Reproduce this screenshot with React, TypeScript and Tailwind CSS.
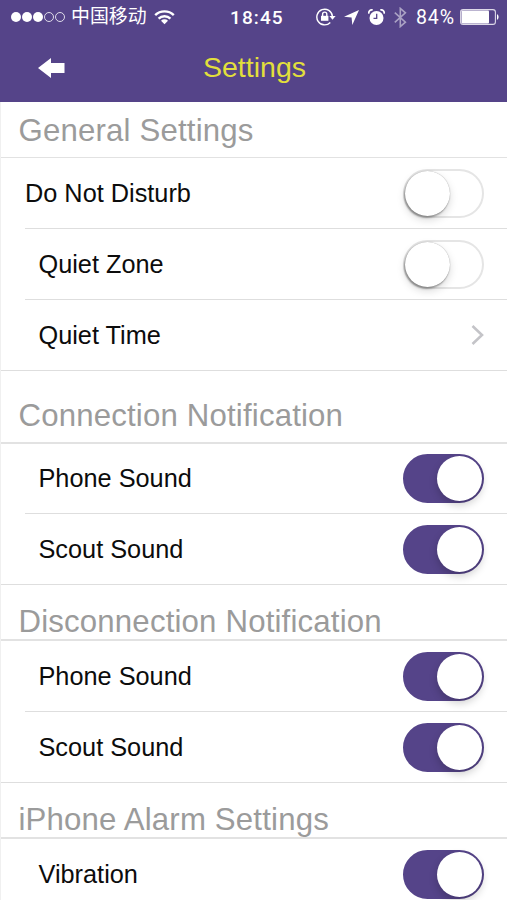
import clsx from "clsx";

type RowProps = {
  label: string;
  on?: boolean;
  link?: boolean;
  outdent?: boolean;
  last?: boolean;
  className?: string;
};

function StatusBar() {
  return (
    <div className="flex h-[34px] items-center pl-[11px] text-white">
      <div className="flex w-[55px] gap-[1.5px]">
        {[1, 1, 1, 0, 0].map((filled, i) => (
          <span
            key={i}
            className={clsx(
              "size-[9.5px] shrink-0 rounded-full",
              filled ? "bg-white" : "border border-white/80",
            )}
          />
        ))}
      </div>
      <span className="ml-[5px] w-[76px] pt-px text-[18.9px] leading-none whitespace-nowrap">
        中国移动
      </span>
      <svg className="ml-[7px]" width="21" height="16" viewBox="0 0 21 16" fill="none" stroke="white" strokeWidth="2.4">
        <path d="M1.2 6.2a13.2 13.2 0 0 1 18.6 0" />
        <path d="M4.6 9.7a8.4 8.4 0 0 1 11.8 0" />
        <path d="M10.5 15.2 7 11.7a5 5 0 0 1 7 0Z" fill="white" stroke="none" />
      </svg>
      <span className="ml-[55px] w-[56px] font-[Roboto] text-[19px] leading-none font-medium tracking-[1.1px]">
        18:45
      </span>
      <svg className="ml-[30px]" width="20" height="18" viewBox="0 0 20 18" fill="none" stroke="white" strokeWidth="1.4">
        <path d="M16.4 8.2A7.8 7.8 0 1 0 14.3 14.4" />
        <path d="m13.4 8 6.2 0-3.1 3.8Z" fill="white" stroke="none" />
        <path d="M6.6 8V6.2a2.1 2.1 0 0 1 4.2 0V8" />
        <path d="M5 7.8h7.4v5H5Z" fill="white" stroke="none" />
      </svg>
      <svg className="ml-[8px]" width="15" height="15" viewBox="0 0 15 15" fill="white">
        <path d="M15 0 8.3 15 7.6 7.6 0 6.8Z" />
      </svg>
      <svg className="ml-[9px]" width="17" height="17" viewBox="0 0 17 17">
        <circle cx="8.5" cy="9" r="7" fill="white" />
        <path d="M.9 4.6A3 3 0 0 1 4.7 1M16.1 4.6A3 3 0 0 0 12.3 1" fill="none" stroke="white" strokeWidth="1.7" />
        <path d="M8.7 4.8v4.5H5.5" fill="none" stroke="#554489" strokeWidth="1.3" />
      </svg>
      <svg className="ml-[9px] opacity-50" width="13" height="21" viewBox="0 0 13 21" fill="none" stroke="white" strokeWidth="1.6">
        <path d="M.8 5.6 11.4 15.2 6.3 19.6V1.4l5.1 4.4L.8 15.4" />
      </svg>
      <span className="ml-[9px] w-[41px] pt-px font-[Roboto] text-[19.5px] leading-none tracking-[0.9px]">
        84%
      </span>
      <svg className="ml-[3px]" width="40" height="16" viewBox="0 0 40 16">
        <rect x=".6" y=".6" width="34.8" height="14.8" rx="2.5" fill="none" stroke="white" strokeOpacity=".8" strokeWidth="1.1" />
        <rect x="1.5" y="1.5" width="27.5" height="13" rx="1" fill="white" />
        <path d="M37 5a3.6 3.6 0 0 1 0 6Z" fill="white" />
      </svg>
    </div>
  );
}

function NavBar() {
  return (
    <div className="flex h-[67px] items-center pl-[38px]">
      <button aria-label="Back">
        <svg width="27" height="20" viewBox="0 0 27 20" fill="white">
          <path d="M0 10 13 0v5h13.5v10H13v5Z" />
        </svg>
      </button>
      <h1 className="ml-[138px] text-[28.5px] leading-none text-[#e2df3c]">
        Settings
      </h1>
    </div>
  );
}

function Toggle({ on }: { on: boolean }) {
  return (
    <button
      role="switch"
      aria-checked={on}
      className={clsx(
        "flex h-[49px] w-[81px] items-center rounded-full border-2",
        on
          ? "justify-end border-[#554489] bg-[#554489]"
          : "justify-start border-[#e5e5e5] bg-white",
      )}
    >
      <span
        className={clsx(
          "size-[45px] rounded-full bg-white",
          on
            ? "shadow-[0_4px_9px_rgba(0,0,0,0.2)]"
            : "shadow-[0_0_1px_rgba(0,0,0,0.4),-1px_2px_2px_rgba(0,0,0,0.3),0_4px_9px_rgba(0,0,0,0.15)]",
        )}
      />
    </button>
  );
}

function Row({ label, on = false, link, outdent, last, className = "h-[71px]" }: RowProps) {
  return (
    <div className={clsx(className, last ? "pl-0" : "pl-[24px]")}>
      <div
        className={clsx(
          "flex h-full items-center justify-between border-b-[1.5px] border-[#dedede] pr-[23px]",
          last ? "pl-[37.5px]" : outdent ? "pl-0" : "pl-[13.5px]",
        )}
      >
        <span className="pt-px text-[25.3px] leading-none text-[#0c0c0c]">
          {label}
        </span>
        {link ? (
          <svg width="13" height="22" viewBox="0 0 13 22" fill="none" stroke="#c4c4c8" strokeWidth="2.6">
            <path d="m1.5 2 9.5 9-9.5 9" />
          </svg>
        ) : (
          <Toggle on={on} />
        )}
      </div>
    </div>
  );
}

function SectionTitle({ title, className }: { title: string; className: string }) {
  return (
    <h2
      className={clsx(
        "flex border-[#e2e2e2] pl-[17.5px] text-[31.2px] leading-none tracking-[0.17px] text-[#9b9b9b]",
        className,
      )}
    >
      {title}
    </h2>
  );
}

export default function App() {
  return (
    <div className="h-[900px] w-[507px] overflow-hidden bg-white font-['Liberation_Sans','Noto_Sans_CJK_SC',sans-serif]">
      <header className="h-[102px] bg-[#554489]">
        <StatusBar />
        <NavBar />
      </header>

      <main className="border-l border-[#f0f0f0]">
        <SectionTitle title="General Settings" className="h-[56px] border-b pt-[13px]" />
        <Row label="Do Not Disturb" outdent />
        <Row label="Quiet Zone" />
        <Row label="Quiet Time" link last />

        <SectionTitle title="Connection Notification" className="h-[73px] border-b-2 pt-[29px]" />
        <Row label="Phone Sound" on className="h-[70px]" />
        <Row label="Scout Sound" on last />

        <SectionTitle title="Disconnection Notification" className="h-[56px] border-b-2 pt-[21px]" />
        <Row label="Phone Sound" on />
        <Row label="Scout Sound" on last />

        <SectionTitle title="iPhone Alarm Settings" className="h-[56px] border-b-2 pt-[21px]" />
        <Row label="Vibration" on className="h-[71px]" />
      </main>
    </div>
  );
}
